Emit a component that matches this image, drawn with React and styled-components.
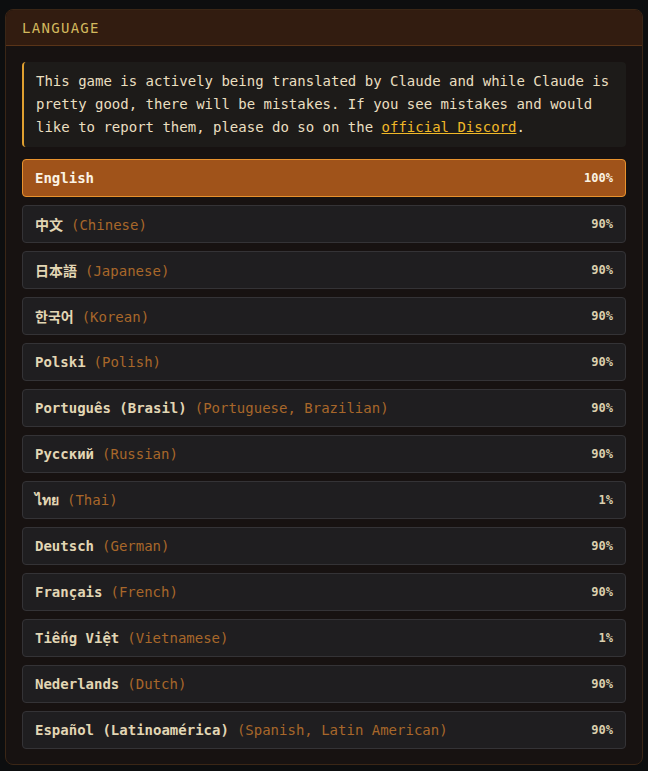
import styled, { createGlobalStyle } from 'styled-components';

const GlobalStyle = createGlobalStyle`
  html, body {
    margin: 0;
    padding: 0;
    background: #0d0e0f;
  }
  body {
    font-family: "DejaVu Sans Mono", "Noto Sans CJK SC", monospace;
  }
`;

const Page = styled.div`
  padding: 9px 5px 6px 5px;
`;

const Panel = styled.section`
  background: #171211;
  border: 1px solid #3a2616;
  border-radius: 8px;
  overflow: hidden;
`;

const PanelHeader = styled.header`
  height: 35px;
  display: flex;
  align-items: center;
  padding: 0 16px;
  background: #321c10;
  border-bottom: 1px solid #5a3418;
`;

const Title = styled.h2`
  margin: 0;
  font-size: 14px;
  font-weight: normal;
  letter-spacing: 1.3px;
  color: #d2b95e;
`;

const Body = styled.div`
  padding: 16px 16px 15px;
  display: flex;
  flex-direction: column;
`;

const Notice = styled.p`
  margin: 0 0 12px;
  padding: 8px 12px;
  background: #1d1b19;
  border-left: 2px solid #e0a030;
  border-radius: 4px;
  color: #eadfc0;
  font-size: 14px;
  line-height: 23px;
`;

const Link = styled.a`
  color: #f0b828;
  text-decoration: underline;
`;

const List = styled.ul`
  list-style: none;
  margin: 0;
  padding: 0;
  display: flex;
  flex-direction: column;
  gap: 8px;
`;

const Row = styled.li`
  height: 36px;
  display: flex;
  align-items: center;
  justify-content: space-between;
  padding: 0 12px;
  border-radius: 4px;
  background: ${p => (p.$active ? '#a0531a' : '#1f1e20')};
  border: 1px solid ${p => (p.$active ? '#e8922e' : '#343336')};
  cursor: pointer;
`;

const Name = styled.span`
  font-size: 14px;
  font-weight: bold;
  color: ${p => (p.$active ? '#fbf3e4' : '#e2d6b4')};
`;

const English = styled.span`
  font-weight: normal;
  color: #a8672a;
  margin-left: 8px;
`;

const Percent = styled.span`
  font-size: 12px;
  font-weight: bold;
  color: ${p => (p.$active ? '#fbf3e4' : '#dcd0ae')};
`;

const languages = [
  { name: 'English', pct: 100, active: true },
  { name: '中文', en: 'Chinese', pct: 90 },
  { name: '日本語', en: 'Japanese', pct: 90 },
  { name: '한국어', en: 'Korean', pct: 90 },
  { name: 'Polski', en: 'Polish', pct: 90 },
  { name: 'Português (Brasil)', en: 'Portuguese, Brazilian', pct: 90 },
  { name: 'Русский', en: 'Russian', pct: 90 },
  { name: 'ไทย', en: 'Thai', pct: 1 },
  { name: 'Deutsch', en: 'German', pct: 90 },
  { name: 'Français', en: 'French', pct: 90 },
  { name: 'Tiếng Việt', en: 'Vietnamese', pct: 1 },
  { name: 'Nederlands', en: 'Dutch', pct: 90 },
  { name: 'Español (Latinoamérica)', en: 'Spanish, Latin American', pct: 90 },
];

export default function App() {
  return (
    <Page>
      <GlobalStyle />
      <Panel>
        <PanelHeader>
          <Title>LANGUAGE</Title>
        </PanelHeader>
        <Body>
          <Notice>
            This game is actively being translated by Claude and while Claude is
            pretty good, there will be mistakes. If you see mistakes and would
            like to report them, please do so on the <Link href="#">official Discord</Link>.
          </Notice>
          <List>
            {languages.map(l => (
              <Row key={l.name} $active={l.active}>
                <Name $active={l.active}>
                  {l.name}
                  {l.en && <English>({l.en})</English>}
                </Name>
                <Percent $active={l.active}>{l.pct}%</Percent>
              </Row>
            ))}
          </List>
        </Body>
      </Panel>
    </Page>
  );
}
